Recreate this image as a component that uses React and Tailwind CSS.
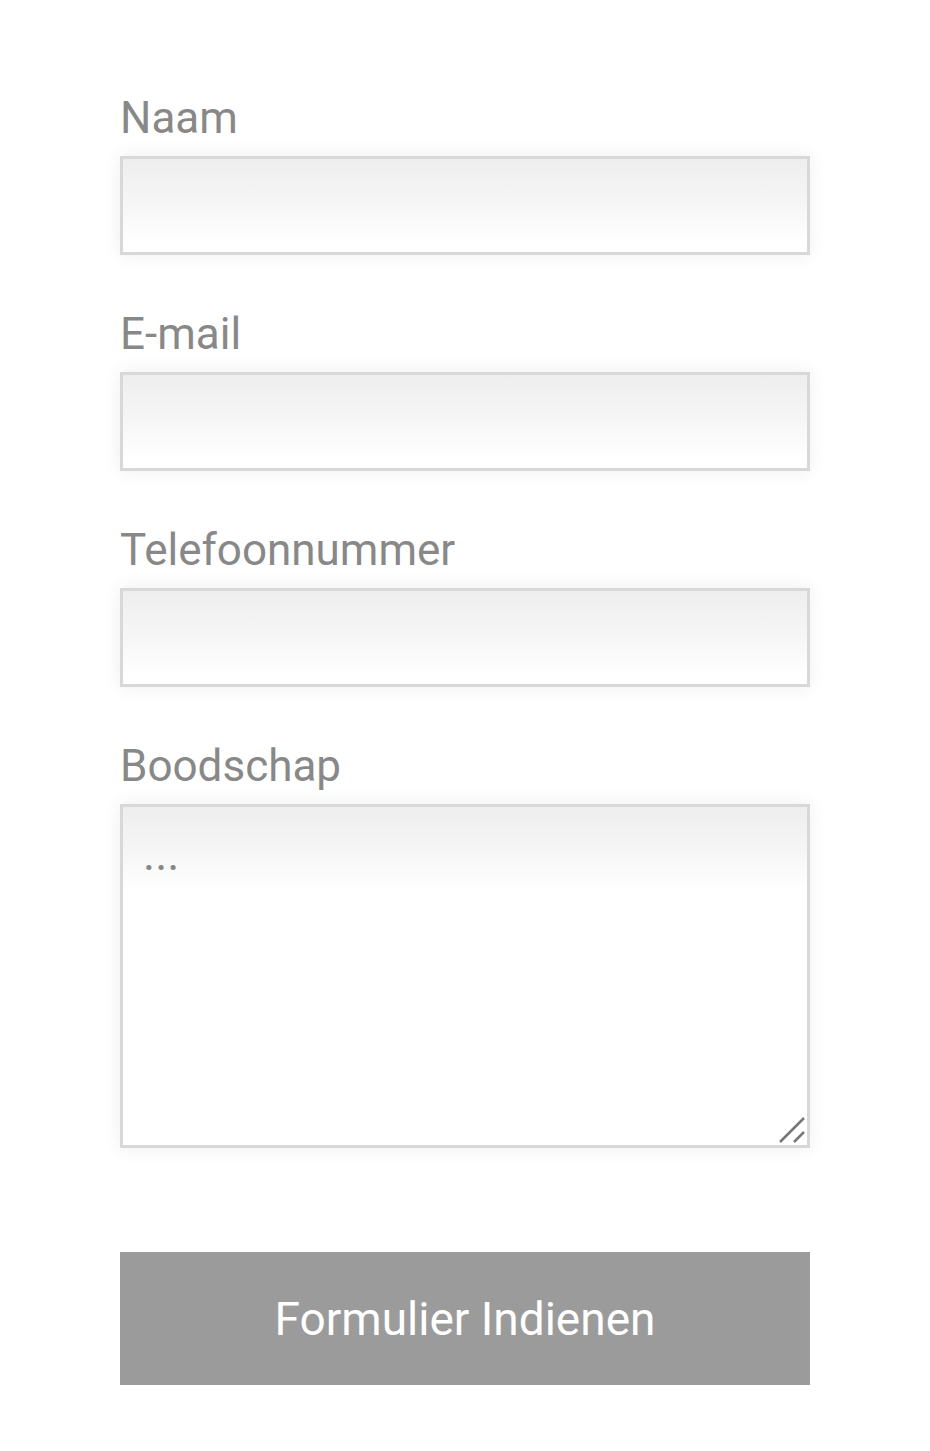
import React from 'react';

const fieldClass =
  'block w-full border-[3px] border-[#d8d8d8] bg-[linear-gradient(to_bottom,#eeeeee_0px,#f4f4f4_35px,#ffffff_85px)] shadow-[0_0_18px_rgba(0,0,0,0.07)] outline-none';

const labelClass = 'block text-[44px] leading-[50px] text-[#888888] mb-[13px]';

const Field = ({ label, children }) => (
  <div className="mb-[54px]">
    <label className={labelClass}>{label}</label>
    {children}
  </div>
);

export default function App() {
  return (
    <div className="min-h-[1451px] bg-white font-['Roboto','Liberation_Sans',sans-serif]">
      <form className="w-[690px] ml-[120px] pt-[93px] pb-[66px]" onSubmit={(e) => e.preventDefault()}>
        <Field label="Naam">
          <input type="text" className={`${fieldClass} h-[99px]`} />
        </Field>
        <Field label="E-mail">
          <input type="email" className={`${fieldClass} h-[99px]`} />
        </Field>
        <Field label="Telefoonnummer">
          <input type="tel" className={`${fieldClass} h-[99px]`} />
        </Field>
        <div>
          <label className={labelClass}>Boodschap</label>
          <div className="relative">
            <textarea
              placeholder="..."
              className={`${fieldClass} h-[344px] resize-none pl-[20px] pt-[22px] text-[46px] leading-[50px] text-[#555] placeholder:text-[#888888]`}
            />
            {/* resize grip */}
            <svg className="absolute right-[4px] bottom-[4px] w-[28px] h-[28px] pointer-events-none" viewBox="0 0 28 28">
              <path d="M2 26 L26 2" stroke="#777" strokeWidth="2.5" />
              <path d="M16 26 L26 16" stroke="#777" strokeWidth="2.5" />
            </svg>
          </div>
        </div>
        <button
          type="submit"
          className="mt-[104px] w-full h-[133px] bg-[#9b9b9b] text-white text-[46px] leading-none"
        >
          Formulier Indienen
        </button>
      </form>
    </div>
  );
}
